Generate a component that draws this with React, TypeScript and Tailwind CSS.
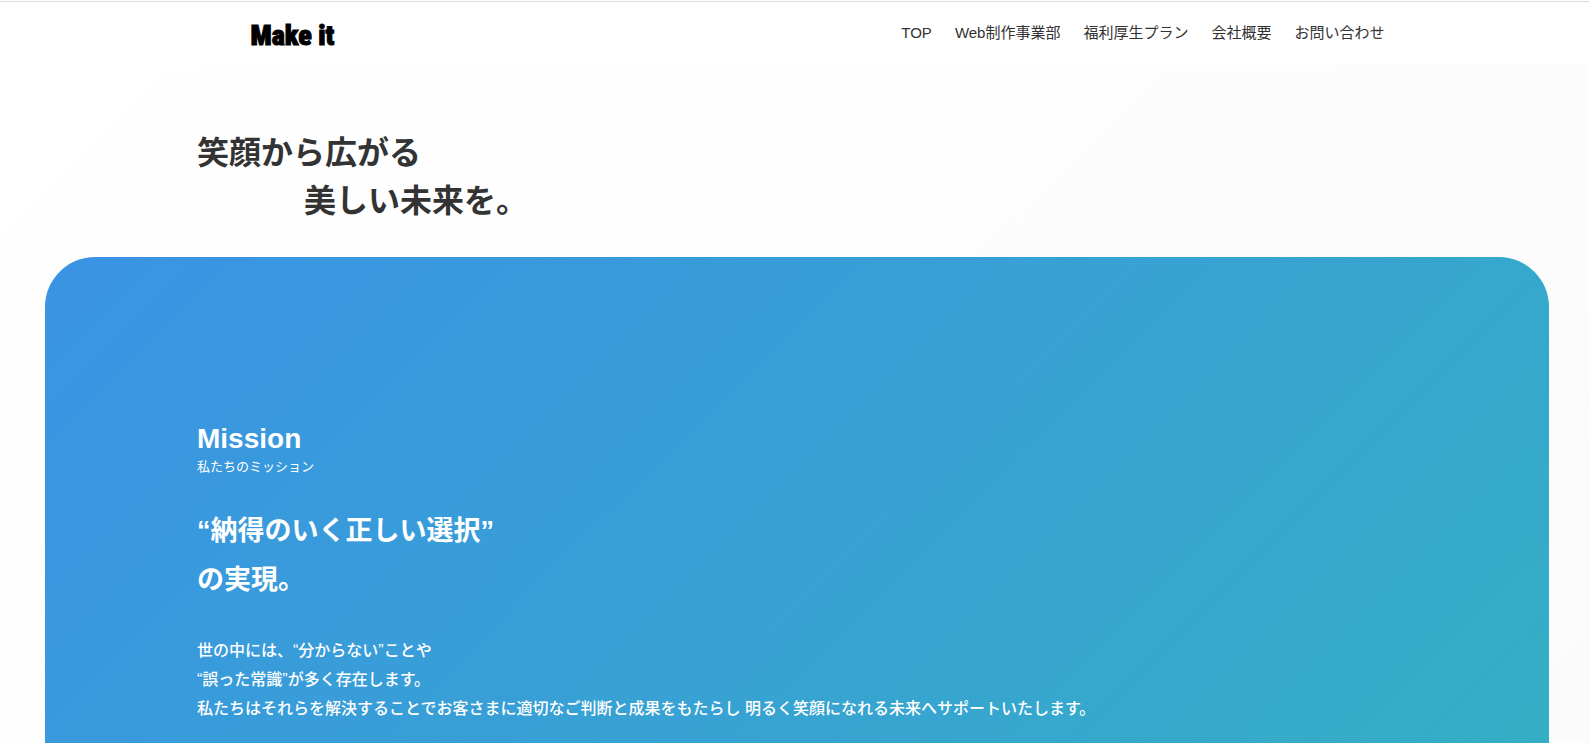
import * as React from "react";

const navItems = [
  { label: "TOP", href: "#top" },
  { label: "Web制作事業部", href: "#web" },
  { label: "福利厚生プラン", href: "#welfare" },
  { label: "会社概要", href: "#company" },
  { label: "お問い合わせ", href: "#contact" },
];

function Header() {
  return (
    <header className="border-t border-[#d8dcdb] bg-white">
      <div className="mx-auto flex h-[63px] max-w-[1200px] items-center justify-between pl-14 pr-2.5">
        <a
          href="#top"
          className="pt-1 font-['Impact','Roboto_Condensed','Liberation_Sans',sans-serif] text-[28px] leading-9 font-black text-black [-webkit-text-stroke:1px_black]"
        >
          Make it
        </a>
        <nav aria-label="メイン">
          <ul className="flex gap-[23px] text-[15px]">
            {navItems.map((item) => (
              <li key={item.label}>
                <a href={item.href}>{item.label}</a>
              </li>
            ))}
          </ul>
        </nav>
      </div>
    </header>
  );
}

function Mission() {
  return (
    <section className="ml-[45px] mr-10 grow rounded-t-[50px] bg-[linear-gradient(135deg,#3a93e4,#35aec5)] pt-[164px] text-white">
      <div className="mx-auto max-w-[1200px]">
        <h2 className="text-[28px] leading-9 font-bold">Mission</h2>
        <p className="text-[13px] leading-5">私たちのミッション</p>
        <h3 className="mt-[30px] text-[27px] leading-[49px] font-bold">
          “納得のいく正しい選択”
          <br />
          の実現。
        </h3>
        <p className="mt-[31px] text-base leading-[29px] font-medium">
          世の中には、“分からない”ことや
          <br />
          “誤った常識”が多く存在します。
          <br />
          私たちはそれらを解決することでお客さまに適切なご判断と成果をもたらし
          明るく笑顔になれる未来へサポートいたします。
        </p>
      </div>
    </section>
  );
}

export default function App() {
  return (
    <div
      lang="ja"
      className="flex min-h-screen flex-col bg-white pt-px font-['Liberation_Sans','Noto_Sans_CJK_JP',sans-serif] text-[#333333]"
    >
      <Header />
      <main className="flex grow flex-col bg-[linear-gradient(135deg,#ffffff,#fbfbfb)] pt-16">
        <div className="ml-[45px] mr-10">
          <h1 className="mx-auto mb-8 max-w-[1200px] text-[32px] leading-12 font-bold">
            笑顔から広がる
            <span className="block pl-[107px]">美しい未来を。</span>
          </h1>
        </div>
        <Mission />
      </main>
    </div>
  );
}
